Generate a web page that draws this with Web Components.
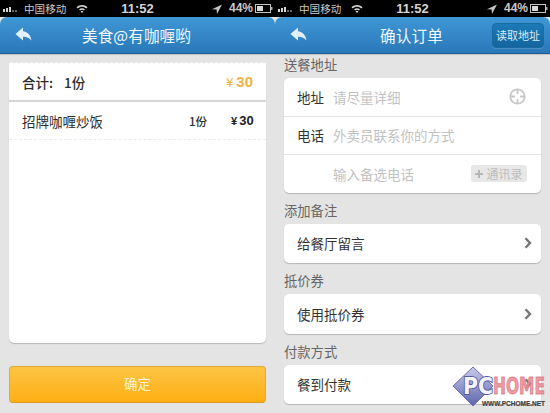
<!DOCTYPE html>
<html lang="zh">
<head>
<meta charset="utf-8">
<title>确认订单</title>
<style>
html,body{margin:0;padding:0;background:#000}
body{width:550px;height:413px;overflow:hidden;font-family:"Noto Sans CJK SC","Liberation Sans",sans-serif}
</style>
</head>
<body>
<app-stage>
  <phone-screen>
    <nav-bar slot="nav" title="美食@有咖喱哟"></nav-bar>
    <order-summary></order-summary>
    <confirm-button>确定</confirm-button>
  </phone-screen>
  <phone-screen>
    <nav-bar slot="nav" title="确认订单"><read-button>读取地址</read-button></nav-bar>
    <order-form></order-form>
  </phone-screen>
  <pc-watermark></pc-watermark>
</app-stage>

<script>
const FONT='"Noto Sans CJK SC","Liberation Sans",sans-serif';
function def(name,html){
  customElements.define(name,class extends HTMLElement{
    constructor(){super();this.attachShadow({mode:'open'});}
    connectedCallback(){
      if(!this.shadowRoot.innerHTML)this.shadowRoot.innerHTML=typeof html==='function'?html(this):html;
    }
  });
}

def('app-stage',`<style>
:host{display:grid;grid-template-columns:275px 275px;width:550px;height:413px;position:relative;overflow:hidden}
</style><slot></slot>`);

def('phone-screen',`<style>
:host{display:flex;flex-direction:column;height:413px;overflow:hidden;font-family:${FONT};background:#e4e4e4}
.body{flex:1;min-height:0;display:flex;flex-direction:column;padding:0 9px}
</style>
<status-bar></status-bar>
<slot name="nav"></slot>
<div class="body"><slot></slot></div>`);

def('status-bar',`<style>
:host{display:flex;align-items:center;height:17px;background:#000;color:#c9c9c9;font:10.6px/17px ${FONT};position:relative;flex:none}
.sig{display:flex;align-items:flex-end;gap:1px;height:7px;margin-left:3px;width:18px}
.sig i{display:block;width:2px;background:#d4d4d4}
.sig i.off{background:#666;height:2px}
.car{margin-left:3px;width:42px;white-space:nowrap}
.wifi{margin-left:10px;display:block}
.time{position:absolute;left:0;right:0;top:0;text-align:center;font:bold 13px/17px "Liberation Sans",sans-serif;color:#d4d4d4;pointer-events:none}
.right{margin-left:auto;display:flex;align-items:center;margin-right:2px}
.pct{font:bold 12px/17px "Liberation Sans",sans-serif;margin:0 2px 0 7px;color:#c9c9c9}
</style>
<div class="sig"><i style="height:3px"></i><i style="height:4px"></i><i style="height:5px"></i><i class="off"></i><i class="off"></i></div>
<span class="car">中国移动</span>
<svg class="wifi" width="12" height="9" viewBox="0 0 12 9"><path d="M.5 3.2C3.6.1 8.4.1 11.5 3.2L10.3 4.4C7.9 2.2 4.1 2.2 1.7 4.4Z" fill="#d4d4d4"/><path d="M3 5.5C4.7 3.9 7.3 3.9 9 5.5L7.9 6.6C6.8 5.6 5.2 5.6 4.1 6.6Z" fill="#d4d4d4"/><path d="M6 9 4.6 7.4C5.4 6.8 6.6 6.8 7.4 7.4Z" fill="#d4d4d4"/></svg>
<span class="time">11:52</span>
<div class="right">
<svg width="10" height="10" viewBox="0 0 10 10"><path d="M10 .5 0 5.2 4.6 5.6 5 10Z" fill="#c4c4c4"/></svg>
<span class="pct">44%</span>
<svg width="18" height="9" viewBox="0 0 18 9"><rect x=".5" y=".5" width="15" height="8" fill="none" stroke="#c4c4c4"/><rect x="2" y="2" width="6" height="5" fill="#d8d8d8"/><rect x="16" y="3" width="1.5" height="3" fill="#aaa"/></svg>
</div>`);

def('nav-bar',el=>`<style>
:host{display:flex;align-items:center;justify-content:center;height:37px;box-sizing:border-box;padding-right:2px;position:relative;flex:none;border-radius:7px 7px 0 0;
background:linear-gradient(#3f97d6,#2a78b8);border-bottom:1px solid #1d5f94;box-shadow:0 1px 1px rgba(0,0,0,.15);z-index:2}
h1{margin:0;font:400 15.6px/35px ${FONT};color:#f1f7fb;letter-spacing:.1px}
.back{position:absolute;left:15px;top:10px}
.act{position:absolute;right:6px;top:6px;display:flex}
</style>
<svg class="back" width="17" height="15" viewBox="0 0 17 15"><path d="M8 .5 .5 7 8 13.5V9.7C11 9.4 14 10.4 16.5 13.4 15.6 8.2 12.6 4.8 8 4.3Z" fill="#e4f0f9"/></svg>
<h1>${el.getAttribute('title')}</h1>
<div class="act"><slot></slot></div>`);

def('read-button',`<style>
:host{display:block;width:52px;height:25px;box-sizing:border-box;border-radius:4px;background:linear-gradient(#1c7ab6,#12669f);border:1px solid #1a6aa0;box-shadow:0 1px 0 rgba(255,255,255,.15);
color:#dbeaf4;font:400 11px/23px ${FONT};text-align:center;white-space:nowrap}
</style><slot></slot>`);

def('order-summary',`<style>
:host{display:flex;flex-direction:column;height:280px;margin-top:9px;background:#fff;border-radius:0 0 5px 5px;box-shadow:0 1px 1px #b9b9b9;position:relative;color:#2e2e2e}
.scallop{position:absolute;left:0;right:0;top:-2px;height:4px;background:radial-gradient(circle at 2.5px 4px,#fff 2.4px,#e4e4e4 2.8px) 0 0/5px 4px repeat-x}
.total{display:flex;align-items:center;height:37px;padding:0 13px;border-bottom:2px solid #d6d6d6;font:14px ${FONT}}
.total b{font-weight:500;margin-left:11px;font-size:13.5px}
.total span.l{font-weight:500;font-size:13.5px}
.total .p{margin-left:auto;color:#f2b345;font:bold 15px "Liberation Sans",${FONT};white-space:nowrap}
.y{font-weight:400;margin-right:3px;font-size:.85em}
.item{display:grid;grid-template-columns:1fr 42px 22px;align-items:center;height:37px;padding:0 13px;border-bottom:1px dashed #ececec;font:13.5px ${FONT}}
.item .q{font-size:11.5px;font-weight:500}
.item .p{text-align:right;font:bold 13px "Liberation Sans",${FONT};color:#222;white-space:nowrap}
.item .y{margin-right:2px;font-weight:700}
</style>
<div class="scallop"></div>
<div class="total"><span class="l">合计:</span><b>1份</b><span class="p"><span class="y">¥</span>30</span></div>
<div class="item"><span>招牌咖喱炒饭</span><span class="q">1份</span><span class="p"><span class="y">¥</span>30</span></div>`);

def('confirm-button',`<style>
:host{display:block;height:37px;margin-top:23px;box-sizing:border-box;border-radius:4px;background:linear-gradient(#fcc544,#feae14);border:1px solid #e2a93c;border-bottom-color:#d99a28;
color:#fff3cf;font:400 13.5px/33px ${FONT};text-align:center}
</style><slot></slot>`);

def('order-form',`<style>
:host{display:flex;flex-direction:column}
</style>
<section-label first>送餐地址</section-label>
<form-card>
  <form-row label="地址" hint="请尽量详细"><svg width="17" height="17" viewBox="0 0 17 17"><circle cx="8.5" cy="8.5" r="7.2" fill="none" stroke="#c8c8c8" stroke-width="1.8"/><path d="M8.5 1v5M8.5 11v5M1 8.5h5M11 8.5h5" stroke="#c8c8c8" stroke-width="1.8"/></svg></form-row>
  <form-row label="电话" hint="外卖员联系你的方式"></form-row>
  <form-row hint="输入备选电话"><contact-pill>通讯录</contact-pill></form-row>
</form-card>
<section-label>添加备注</section-label>
<form-card><link-row>给餐厅留言</link-row></form-card>
<section-label>抵价券</section-label>
<form-card><link-row>使用抵价券</link-row></form-card>
<section-label>付款方式</section-label>
<form-card><link-row>餐到付款</link-row></form-card>`);

def('section-label',`<style>
:host{display:block;padding:8px 0 3px;font:400 13.3px/20px ${FONT};color:#666}
:host([first]){padding-top:1px}
</style><slot></slot>`);

def('form-card',`<style>
:host{display:flex;flex-direction:column;background:#fff;border-radius:5px;box-shadow:0 1px 1px #b5b5b5}
::slotted(*:not(:last-child)){border-bottom:1px solid #e4e4e4}
</style><slot></slot>`);

def('form-row',el=>`<style>
:host{display:grid;grid-template-columns:36px 1fr auto;align-items:center;height:37.5px;padding:0 13px;font:13.5px ${FONT};color:#333}
.h{color:#c2c2c2;white-space:nowrap}
.a{display:flex;align-items:center;margin-right:2px}
</style><span>${el.getAttribute('label')||''}</span><span class="h">${el.getAttribute('hint')||''}</span><span class="a"><slot></slot></span>`);

def('contact-pill',`<style>
:host{display:flex;align-items:center;justify-content:center;gap:3px;width:56px;height:17px;margin-right:-1px;border-radius:3px;background:#e7e7e7;color:#bcbcbc;font:12px/17px ${FONT}}
svg{display:block}
</style><svg width="8" height="8" viewBox="0 0 8 8"><path d="M3 0h2v3h3v2H5v3H3V5H0V3h3Z" fill="#b5b5b5"/></svg><span><slot></slot></span>`);

def('link-row',`<style>
:host{display:flex;align-items:center;justify-content:space-between;height:39.5px;padding:0 9px 0 13px;font:13.5px ${FONT};color:#333}
</style><span><slot></slot></span><svg width="8" height="12" viewBox="0 0 8 12"><path d="M1.5 1.2 6 6 1.5 10.8" fill="none" stroke="#757575" stroke-width="2.4"/></svg>`);

def('pc-watermark',`<style>
:host{position:absolute;left:452px;top:366px;width:96px;height:42px;display:block;pointer-events:none}
svg{display:block}
</style>
<svg width="96" height="42" viewBox="0 0 96 42">
<defs><linearGradient id="d" x1="0" y1="0" x2="0" y2="1"><stop offset="0" stop-color="#c9cbe9"/><stop offset="1" stop-color="#5e64ad"/></linearGradient></defs>
<path d="M21 1 41 20 21 40 1 20Z" fill="url(#d)" stroke="#6a6fb2"/>
<g font-family="DejaVu Sans" font-weight="bold" font-size="14">
<text transform="translate(11 28) scale(1 1.6)" fill="#f3f3fa" stroke="#565ca4" stroke-width="1.2" paint-order="stroke" textLength="30" lengthAdjust="spacingAndGlyphs">PC</text>
<text transform="translate(41 28) scale(1 1.6)" fill="#e98f98" fill-opacity=".9" stroke="#dc6c77" stroke-opacity=".75" stroke-width=".6" textLength="52" lengthAdjust="spacingAndGlyphs">HOME</text>
</g>
<text x="30" y="40" font-family="Liberation Sans" font-weight="bold" font-size="6.3" fill="#3c3c3c" stroke="#3c3c3c" stroke-width=".15" textLength="63" lengthAdjust="spacingAndGlyphs">WWW.PCHOME.NET</text>
</svg>`);
</script>
</body>
</html>
